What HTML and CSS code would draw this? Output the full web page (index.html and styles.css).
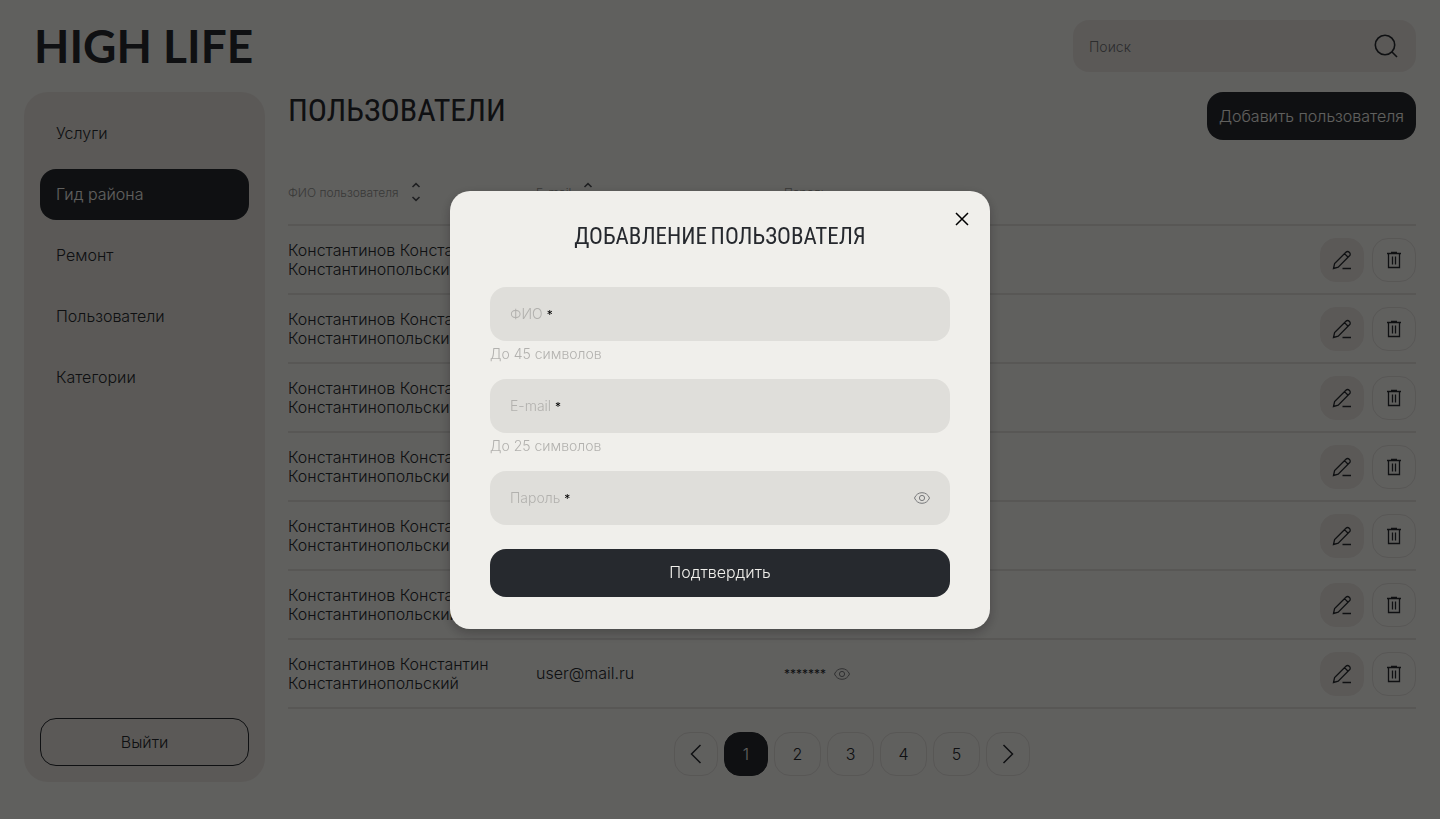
FILE: index.html
```html
<!DOCTYPE html>
<html lang="ru">
<head>
<meta charset="utf-8">
<meta name="viewport" content="width=device-width, initial-scale=1">
<title>High Life — Пользователи</title>
<link rel="stylesheet" href="styles.css">
</head>
<body>
<svg class="sprite" aria-hidden="true">
  <symbol id="pencil" viewBox="0 0 24 24"><path d="M3.500 20.500 4.600 15.600 15.900 4.200a2.300 2.300 0 0 1 3.300 0l.3.3a2.300 2.300 0 0 1 0 3.300L8.200 19.200Z M14.500 5.600l3.600 3.600 M12.500 20.500h8.500"/></symbol>
  <symbol id="trash" viewBox="0 0 24 24"><path d="M5 5.500h14 M9 4.500h6 M6.500 5.500v14h11v-14 M10.500 8.500v8 M13.500 8.500v8"/></symbol>
  <symbol id="eye" viewBox="0 0 16 12"><path d="M.5 6C2 2.500 4.700.7 8 .7S14 2.500 15.500 6C14 9.500 11.300 11.300 8 11.300S2 9.500.5 6Z"/><circle cx="8" cy="6" r="2.600"/></symbol>
  <symbol id="sort" viewBox="0 0 10 20"><path d="M1.500 5 5 1.700 8.500 5 M1.500 15 5 18.300 8.500 15"/></symbol>
</svg>

<header class="header">
  <a class="logo" href="#">HIGH LIFE</a>
  <form class="search">
    <input class="search-input" type="search" placeholder="Поиск" aria-label="Поиск">
    <button class="plain-button" type="button" aria-label="Найти"><svg class="icon-search" viewBox="0 0 24 24"><circle cx="11" cy="11" r="9.700"/><path d="m18 18 5 5"/></svg></button>
  </form>
</header>

<div class="layout">
  <aside class="sidebar">
    <nav class="menu">
      <a class="menu-link" href="#">Услуги</a>
      <a class="menu-link active" href="#">Гид района</a>
      <a class="menu-link" href="#">Ремонт</a>
      <a class="menu-link" href="#">Пользователи</a>
      <a class="menu-link" href="#">Категории</a>
    </nav>
    <button class="logout" type="button">Выйти</button>
  </aside>

  <main class="main">
    <div class="title-row">
      <h1 class="page-title">ПОЛЬЗОВАТЕЛИ</h1>
      <button class="add-button" type="button">Добавить пользователя</button>
    </div>
    <table class="users">
      <thead>
        <tr>
          <th class="col"><span class="head-cell">ФИО пользователя <svg class="icon-sort"><use href="#sort"/></svg></span></th>
          <th class="col"><span class="head-cell">E-mail <svg class="icon-sort"><use href="#sort"/></svg></span></th>
          <th>Пароль</th>
          <th class="col-actions"></th>
        </tr>
      </thead>
      <tbody>
        <tr><td>Константинов Константин Константинопольский</td><td>user@mail.ru</td><td><span class="password"><span class="stars">*******</span> <svg class="icon-eye"><use href="#eye"/></svg></span></td><td><div class="actions"><button class="action edit" type="button" aria-label="Изменить"><svg class="icon"><use href="#pencil"/></svg></button><button class="action" type="button" aria-label="Удалить"><svg class="icon"><use href="#trash"/></svg></button></div></td></tr>
        <tr><td>Константинов Константин Константинопольский</td><td>user@mail.ru</td><td><span class="password"><span class="stars">*******</span> <svg class="icon-eye"><use href="#eye"/></svg></span></td><td><div class="actions"><button class="action edit" type="button" aria-label="Изменить"><svg class="icon"><use href="#pencil"/></svg></button><button class="action" type="button" aria-label="Удалить"><svg class="icon"><use href="#trash"/></svg></button></div></td></tr>
        <tr><td>Константинов Константин Константинопольский</td><td>user@mail.ru</td><td><span class="password"><span class="stars">*******</span> <svg class="icon-eye"><use href="#eye"/></svg></span></td><td><div class="actions"><button class="action edit" type="button" aria-label="Изменить"><svg class="icon"><use href="#pencil"/></svg></button><button class="action" type="button" aria-label="Удалить"><svg class="icon"><use href="#trash"/></svg></button></div></td></tr>
        <tr><td>Константинов Константин Константинопольский</td><td>user@mail.ru</td><td><span class="password"><span class="stars">*******</span> <svg class="icon-eye"><use href="#eye"/></svg></span></td><td><div class="actions"><button class="action edit" type="button" aria-label="Изменить"><svg class="icon"><use href="#pencil"/></svg></button><button class="action" type="button" aria-label="Удалить"><svg class="icon"><use href="#trash"/></svg></button></div></td></tr>
        <tr><td>Константинов Константин Константинопольский</td><td>user@mail.ru</td><td><span class="password"><span class="stars">*******</span> <svg class="icon-eye"><use href="#eye"/></svg></span></td><td><div class="actions"><button class="action edit" type="button" aria-label="Изменить"><svg class="icon"><use href="#pencil"/></svg></button><button class="action" type="button" aria-label="Удалить"><svg class="icon"><use href="#trash"/></svg></button></div></td></tr>
        <tr><td>Константинов Константин Константинопольский</td><td>user@mail.ru</td><td><span class="password"><span class="stars">*******</span> <svg class="icon-eye"><use href="#eye"/></svg></span></td><td><div class="actions"><button class="action edit" type="button" aria-label="Изменить"><svg class="icon"><use href="#pencil"/></svg></button><button class="action" type="button" aria-label="Удалить"><svg class="icon"><use href="#trash"/></svg></button></div></td></tr>
        <tr><td>Константинов Константин Константинопольский</td><td>user@mail.ru</td><td><span class="password"><span class="stars">*******</span> <svg class="icon-eye"><use href="#eye"/></svg></span></td><td><div class="actions"><button class="action edit" type="button" aria-label="Изменить"><svg class="icon"><use href="#pencil"/></svg></button><button class="action" type="button" aria-label="Удалить"><svg class="icon"><use href="#trash"/></svg></button></div></td></tr>
      </tbody>
    </table>
    <nav class="pagination" aria-label="Страницы">
      <button class="page arrow" type="button" aria-label="Назад"><svg class="icon-arrow" viewBox="0 0 12 20"><path d="M10.500 1 1.500 10l9 9"/></svg></button>
      <button class="page arrow current" type="button">1</button>
      <button class="page" type="button">2</button>
      <button class="page" type="button">3</button>
      <button class="page" type="button">4</button>
      <button class="page" type="button">5</button>
      <button class="page arrow" type="button" aria-label="Вперёд"><svg class="icon-arrow" viewBox="0 0 12 20"><path d="m1.500 1 9 9-9 9"/></svg></button>
    </nav>
  </main>
</div>

<div class="overlay">
  <section class="modal" role="dialog" aria-modal="true" aria-labelledby="modal-title">
    <button class="plain-button close" type="button" aria-label="Закрыть"><svg class="icon-close" viewBox="0 0 14 14"><path d="m1 1 12 12M13 1 1 13"/></svg></button>
    <h2 class="modal-title" id="modal-title">ДОБАВЛЕНИЕ ПОЛЬЗОВАТЕЛЯ</h2>
    <form class="form">
      <div class="field">
        <input class="field-input" id="name" type="text" maxlength="45" required>
        <label class="field-label" for="name">ФИО <span class="required">*</span></label>
      </div>
      <p class="hint">До 45 символов</p>
      <div class="field">
        <input class="field-input" id="email" type="email" maxlength="25" required>
        <label class="field-label" for="email">E-mail <span class="required">*</span></label>
      </div>
      <p class="hint">До 25 символов</p>
      <div class="field">
        <input class="field-input" id="password" type="password" required>
        <label class="field-label" for="password">Пароль <span class="required">*</span></label>
        <button class="plain-button reveal" type="button" aria-label="Показать пароль"><svg class="icon-eye"><use href="#eye"/></svg></button>
      </div>
      <button class="submit" type="submit">Подтвердить</button>
    </form>
  </section>
</div>
</body>
</html>
```

FILE: styles.css
```css
:root {
  --bg: #f0efeb;
  --panel: #e3dfda;
  --field: #dfdeda;
  --line: #dbd9d5;
  --dark: #26292e;
  --muted: #b2b1ae;
}

* { box-sizing: border-box; }

body {
  margin: 0;
  min-height: 100vh;
  display: flex;
  flex-direction: column;
  background: var(--bg);
  color: var(--dark);
  font: 300 16px/19px Inter, sans-serif;
}

button, input { font: inherit; color: inherit; }
button { cursor: pointer; }
a { color: inherit; text-decoration: none; }
svg { display: block; fill: none; stroke: currentColor; }
.sprite { width: 0; height: 0; position: absolute; }
.plain-button { padding: 0; border: 0; background: none; }

.header {
  display: flex;
  justify-content: space-between;
  align-items: center;
  padding: 20px 24px;
}
.logo {
  padding-left: 10px;
  font: 700 46px/52px Lato, sans-serif;
}
.search {
  display: flex;
  align-items: center;
  width: 343px;
  height: 52px;
  padding: 0 16px;
  border-radius: 16px;
  background: var(--panel);
}
.search-input {
  flex: 1;
  min-width: 0;
  padding: 0;
  border: 0;
  background: none;
  font-size: 14px;
}
.search-input::placeholder { color: #6f7073; opacity: 1; }
.icon-search { width: 24px; height: 24px; margin-right: 2px; stroke-width: 1.600; }

.layout {
  flex: 1;
  display: flex;
  gap: 23px;
  padding: 0 24px 37px;
}
.sidebar {
  flex: 0 0 241px;
  display: flex;
  flex-direction: column;
  justify-content: space-between;
  padding: 16px;
  border-radius: 24px;
  background: var(--panel);
}
.menu { display: flex; flex-direction: column; gap: 10px; }
.menu-link { padding: 16px; border-radius: 16px; }
.active { background: var(--dark); color: var(--bg); }
.logout {
  height: 48px;
  border: 1px solid var(--dark);
  border-radius: 16px;
  background: none;
}

.main { flex: 1; min-width: 0; }
.title-row {
  display: flex;
  justify-content: space-between;
  align-items: flex-start;
}
.page-title {
  margin: 0;
  font: 400 32px/40px "Bebas Neue", "Roboto Condensed", Roboto, sans-serif;
}
.add-button {
  height: 48px;
  padding: 0 12px;
  border: 0;
  border-radius: 16px;
  background: var(--dark);
  color: var(--bg);
}

.users {
  width: 100%;
  margin-top: 20px;
  border-collapse: collapse;
  table-layout: fixed;
}
.users th {
  height: 65px;
  padding: 0;
  border-bottom: 2px solid var(--line);
  color: #8f8f8d;
  font-size: 12px;
  font-weight: 300;
  text-align: left;
}
.users td {
  height: 69px;
  padding: 0;
  border-bottom: 2px solid var(--line);
}
.col { width: 248px; }
.col-actions { width: 96px; }
.head-cell { display: flex; align-items: center; gap: 12px; }
.icon-sort { width: 10px; height: 20px; color: #4d4f53; stroke-width: 1.600; }
.password { display: flex; align-items: center; gap: 8px; }
.stars { font-size: 12px; font-weight: 400; }
.icon-eye { width: 16px; height: 12px; color: #77787a; }
.actions { display: flex; gap: 8px; }
.action {
  display: grid;
  place-items: center;
  width: 44px;
  height: 44px;
  padding: 0;
  border: 1px solid var(--line);
  border-radius: 16px;
  background: none;
}
.edit { border-color: var(--panel); background: var(--panel); }
.icon { width: 24px; height: 24px; stroke-width: 1.300; }

.pagination {
  display: flex;
  justify-content: center;
  gap: 6px;
  margin-top: 23px;
}
.page {
  display: grid;
  place-items: center;
  width: 47px;
  height: 44px;
  padding: 0;
  border: 1px solid var(--line);
  border-radius: 16px;
  background: none;
}
.arrow { width: 44px; }
.current { border-color: var(--dark); background: var(--dark); color: var(--bg); }
.icon-arrow { width: 12px; height: 20px; stroke-width: 1.500; }

.overlay {
  position: fixed;
  inset: 0;
  display: grid;
  place-items: center;
  background: rgba(0, 0, 0, .6);
}
.modal {
  position: relative;
  width: 540px;
  max-width: 100%;
  padding: 26px 40px 32px;
  border-radius: 20px;
  background: var(--bg);
  box-shadow: 0 4px 12px rgba(0, 0, 0, .25);
}
.close { position: absolute; top: 21px; right: 21px; color: #000; }
.icon-close { width: 14px; height: 14px; stroke-width: 1.500; }
.modal-title {
  margin: 0 0 30px;
  font: 400 23px/40px "Bebas Neue", "Roboto Condensed", Roboto, sans-serif;
  text-align: center;
}
.form { display: flex; flex-direction: column; }
.field { position: relative; }
.field-input {
  display: block;
  width: 100%;
  height: 54px;
  padding: 0 20px;
  border: 0;
  border-radius: 16px;
  background: var(--field);
}
.field-label {
  position: absolute;
  top: 17px;
  left: 20px;
  color: var(--muted);
  font-size: 14px;
}
.required { color: #000; font-size: 12px; font-weight: 400; }
.hint {
  margin: 0 0 12px;
  color: var(--muted);
  font-size: 14px;
  line-height: 26px;
}
.reveal { position: absolute; top: 21px; right: 20px; }
.submit {
  height: 48px;
  margin-top: 24px;
  border: 0;
  border-radius: 16px;
  background: var(--dark);
  color: var(--bg);
}
```
